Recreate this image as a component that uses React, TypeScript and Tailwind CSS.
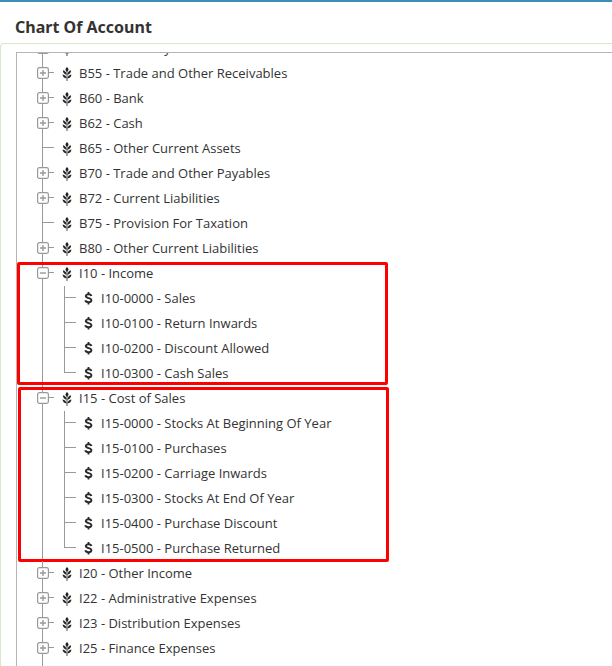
import React, { useState } from 'react';

type Account = {
    code: string;
    name: string;
    kind?: 'group' | 'leaf';
    expanded?: boolean;
    marker?: string;
    children?: Account[];
};

const accounts: Account[] = [
    { code: 'B50', name: 'Inventory', kind: 'group' },
    { code: 'B55', name: 'Trade and Other Receivables', kind: 'group' },
    { code: 'B60', name: 'Bank', kind: 'group' },
    { code: 'B62', name: 'Cash', kind: 'group' },
    { code: 'B65', name: 'Other Current Assets' },
    { code: 'B70', name: 'Trade and Other Payables', kind: 'group' },
    { code: 'B72', name: 'Current Liabilities', kind: 'group' },
    { code: 'B75', name: 'Provision For Taxation' },
    { code: 'B80', name: 'Other Current Liabilities', kind: 'group' },
    {
        code: 'I10',
        name: 'Income',
        kind: 'group',
        expanded: true,
        marker: 'left-0 bottom-px',
        children: [
            { code: 'I10-0000', name: 'Sales', kind: 'leaf' },
            { code: 'I10-0100', name: 'Return Inwards', kind: 'leaf' },
            { code: 'I10-0200', name: 'Discount Allowed', kind: 'leaf' },
            { code: 'I10-0300', name: 'Cash Sales', kind: 'leaf' },
        ],
    },
    {
        code: 'I15',
        name: 'Cost of Sales',
        kind: 'group',
        expanded: true,
        marker: 'left-px -bottom-px',
        children: [
            { code: 'I15-0000', name: 'Stocks At Beginning Of Year', kind: 'leaf' },
            { code: 'I15-0100', name: 'Purchases', kind: 'leaf' },
            { code: 'I15-0200', name: 'Carriage Inwards', kind: 'leaf' },
            { code: 'I15-0300', name: 'Stocks At End Of Year', kind: 'leaf' },
            { code: 'I15-0400', name: 'Purchase Discount', kind: 'leaf' },
            { code: 'I15-0500', name: 'Purchase Returned', kind: 'leaf' },
        ],
    },
    { code: 'I20', name: 'Other Income', kind: 'group' },
    { code: 'I22', name: 'Administrative Expenses', kind: 'group' },
    { code: 'I23', name: 'Distribution Expenses', kind: 'group' },
    { code: 'I25', name: 'Finance Expenses', kind: 'group' },
    { code: 'I30', name: 'Taxation', kind: 'group' },
];

function GrainIcon() {
    return (
        <svg viewBox="0 0 10 14" className="w-2.5 h-3.5 mt-1.5 shrink-0" fill="#222" aria-hidden="true">
            <path d="M5 0C6 1.1 6.6 1.9 6.5 2.7C6.4 3.5 5.8 4 5 4.7C4.2 4 3.6 3.5 3.5 2.7C3.4 1.9 4 1.1 5 0Z" />
            <path d="M.9 3.2C3.1 3.7 4.3 5.1 4.6 7.7C2.4 7.1.9 5.7.9 3.2Z" />
            <path d="M9.1 3.2C6.9 3.7 5.7 5.1 5.4 7.7C7.6 7.1 9.1 5.7 9.1 3.2Z" />
            <path d="M.6 7.6C2.9 8 4.3 9.2 4.6 11.6C2.2 11.2.6 10 .6 7.6Z" />
            <path d="M9.4 7.6C7.1 8 5.7 9.2 5.4 11.6C7.8 11.2 9.4 10 9.4 7.6Z" />
            <path d="M4.6 4h.8v10h-.8z" />
        </svg>
    );
}

function DollarIcon() {
    return (
        <svg viewBox="0 0 10 14" className="w-2.5 h-3.5 mt-1.5 shrink-0" fill="none" stroke="#2b2b2b" aria-hidden="true">
            <path d="M4.5 0v2.4M4.5 10v2.4" strokeWidth="1.8" />
            <path d="M7.4 4C7.1 2.8 6 2.2 4.6 2.2C3 2.2 1.8 2.9 1.8 4.1C1.8 6.7 7.4 5.6 7.4 8.3C7.4 9.6 6.1 10.2 4.5 10.2C2.9 10.2 1.6 9.6 1.3 8.3" strokeWidth="1.9" />
        </svg>
    );
}

function AccountNode({ account, isLast }: { account: Account; isLast: boolean }) {
    const [open, setOpen] = useState(Boolean(account.expanded));
    const isLeaf = account.kind === 'leaf';

    return (
        <li className={isLeaf ? 'relative flex items-start pl-2.5' : 'relative flex items-start pl-[25px]'}>
            {/* Connector lines */}
            <div className={isLast && isLeaf ? 'relative w-3 shrink-0 border-l border-[#999]' : 'relative w-3 shrink-0 self-stretch border-l border-[#999]'}>
                <div className="h-3 border-b border-[#999]"></div>
                {account.kind === 'group' && (
                    <button
                        type="button"
                        onClick={() => setOpen(!open)}
                        aria-expanded={open}
                        aria-label={`Toggle ${account.name}`}
                        className="absolute -left-1.5 top-1.5 w-3 h-3 bg-white"
                    >
                        <svg viewBox="0 0 12 12" className="block w-3 h-3" fill="none" stroke="#999">
                            <rect x=".6" y=".6" width="10.8" height="10.8" rx="1.8" strokeWidth="1.2" />
                            <path d={open ? 'M3 6h6' : 'M3 6h6M6 3v6'} strokeWidth="1.4" />
                        </svg>
                    </button>
                )}
            </div>
            <div className="flex-1 min-w-0">
                <div className="flex items-start gap-[7px] h-[25px] pl-2">
                    {isLeaf ? <DollarIcon /> : <GrainIcon />}
                    <span className="whitespace-nowrap">{account.code} - {account.name}</span>
                </div>
                {open && account.children && (
                    <ul>
                        {account.children.map((child, i) => (
                            <AccountNode key={child.code} account={child} isLast={i === account.children!.length - 1} />
                        ))}
                    </ul>
                )}
            </div>
            {account.marker && (
                <div className={`absolute top-px w-[371px] border-3 border-[#f00] rounded-xs pointer-events-none ${account.marker}`}></div>
            )}
        </li>
    );
}

export default function App() {
    return (
        <div className="h-screen flex flex-col overflow-hidden bg-white border-t-2 border-[#3c8dbc] text-[#333]">
            <h1 className="h-[41px] pl-[15px] pt-[13px] text-base leading-6 font-bold font-['Noto_Sans',sans-serif]">Chart Of Account</h1>
            <div className="flex-1 min-h-0 flex flex-col border-l border-t border-[#d6e9c6] rounded-tl pl-[15px] pt-2">
                <div className="flex-1 min-h-0 overflow-hidden border-l border-t border-[#b5b5b5]">
                    <ul className="-mt-[17px] text-[13px] leading-[25px] font-['Open_Sans',sans-serif]">
                        {accounts.map((account, i) => (
                            <AccountNode key={account.code} account={account} isLast={i === accounts.length - 1} />
                        ))}
                    </ul>
                </div>
            </div>
        </div>
    );
}
